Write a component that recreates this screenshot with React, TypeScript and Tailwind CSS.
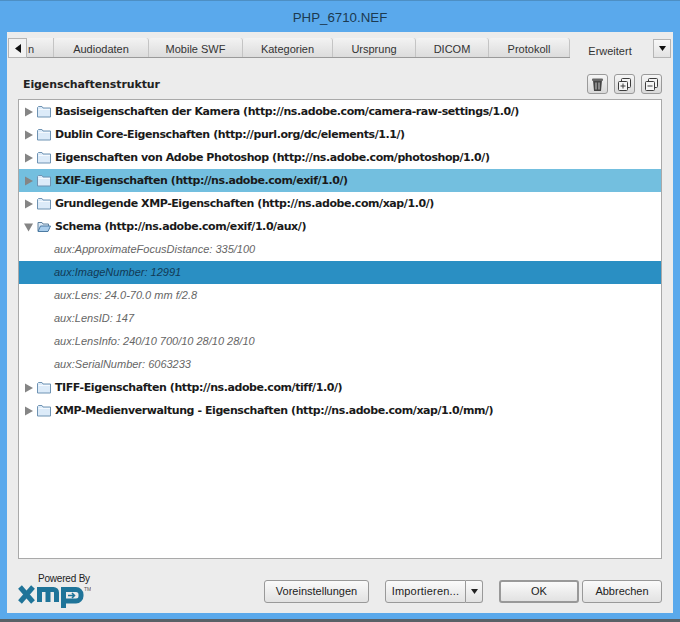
const FONT = "font-['Liberation_Sans',Arial,sans-serif]";

const tabs = [
  { label: "Audiodaten", width: "w-[95px]" },
  { label: "Mobile SWF", width: "w-[94px]" },
  { label: "Kategorien", width: "w-[90px]" },
  { label: "Ursprung", width: "w-[83px]" },
  { label: "DICOM", width: "w-[73px]" },
  { label: "Protokoll", width: "w-[81px]" },
];

const Folder = ({ open }: { open?: boolean }) => (
  <svg width="14" height="13" viewBox="0 0 14 13" className="shrink-0">
    {open ? (
      <>
        <path d="M1 11V2.5h4l1 1.5h5.5V6" fill="#dbe9f6" stroke="#5d7f9c" />
        <path d="M1 11.5 3.5 6h10l-2.5 5.5z" fill="#a9cdec" stroke="#4d7ba3" />
      </>
    ) : (
      <>
        <path d="M.5 12V2.5l1-1h3.5l1 1.5h7.5v9z" fill="#dcebf9" stroke="#6f93b3" />
        <path d="M1.5 4.5h11.5" stroke="#f4f9fe" />
      </>
    )}
  </svg>
);

const Arrow = ({ open }: { open?: boolean }) => (
  <svg width="9" height="10" viewBox="0 0 9 10" className="shrink-0">
    <path d={open ? "M0 1.5h9L4.5 9.5z" : "M1 .5 9 5l-8 4.5z"} fill="#858585" />
  </svg>
);

const GroupRow = ({ label, open, active }: { label: string; open?: boolean; active?: boolean }) => (
  <div className={`h-[23px] flex items-center pl-[5px] ${active ? "bg-[#73bfdf]" : ""}`}>
    <Arrow open={open} />
    <span className="ml-[4px]"><Folder open={open} /></span>
    <span className="ml-[4px] pt-[1px] font-['DejaVu_Sans',sans-serif] font-bold text-[11px] tracking-[-0.42px] text-[#1a1a1a] whitespace-nowrap">
      {label}
    </span>
  </div>
);

const LeafRow = ({ label, active }: { label: string; active?: boolean }) => (
  <div className={`h-[23px] flex items-center pl-[35px] ${active ? "bg-[#2a8fc3]" : ""}`}>
    <span className={`${FONT} italic text-[11px] whitespace-nowrap ${active ? "text-[#123a55]" : "text-[#666]"}`}>
      {label}
    </span>
  </div>
);

const Btn = ({ children, className = "" }: { children: React.ReactNode; className?: string }) => (
  <button className={`h-[23px] rounded-[3px] border border-[#999] bg-gradient-to-b from-[#fafafa] to-[#e2e2e2] text-[11px] text-[#222] flex items-center justify-center ${className}`}>
    {children}
  </button>
);

const IconBtn = ({ children }: { children: React.ReactNode }) => (
  <button className="w-[21px] h-[20px] rounded-[3px] border border-[#9a9a9a] bg-gradient-to-b from-[#f6f6f6] to-[#d9d9d9] flex items-center justify-center">
    {children}
  </button>
);

const Stack = ({ minus }: { minus?: boolean }) => (
  <svg width="15" height="15" viewBox="0 0 15 15" fill="#f4f4f4" stroke="#3c3c3c">
    <rect x="4.5" y="1.5" width="9" height="9" rx="1" />
    <rect x="1.5" y="4.5" width="9" height="9" rx="1" />
    <path d={minus ? "M3.5 9h5" : "M3.5 9h5M6 6.5v5"} fill="none" />
  </svg>
);

// xmp logo mark
const XmpLogo = () => (
  <svg width="73" height="23" viewBox="0 0 73 23" fill="none" stroke="#1f7499" strokeWidth="5">
    <path d="M2 2 15 17M15 2 2 17" />
    <path d="M21.5 17V4.5H35.5a3 3 0 0 1 3 3V17M30 4.5V17" />
    <path d="M45.5 23V4.5H58a5 5 0 0 1 5 5v1.5a5 5 0 0 1-5 5H48" />
    <path d="M50 10.5h6M54 8l2.5 2.5L54 13" stroke="#1f7499" strokeWidth="1.5" />
    <text x="66" y="6" fontSize="5" fill="#555" stroke="none" fontFamily="Liberation Sans">TM</text>
  </svg>
);

export default function App() {
  return (
    <div className={`${FONT} w-[680px] h-[622px] overflow-hidden bg-[#5aa9ec] flex flex-col`}>
      <div className="h-[32px] shrink-0 flex items-center justify-center pt-[3px] border-t border-[#4d8fc4] text-[13.3px] text-[#1c3a50]">
        PHP_6710.NEF
      </div>
      <div className="mx-[7px] h-[581px] shrink-0 bg-[#ececec] flex flex-col">
        {/* tab strip */}
        <div className="h-[27px] pt-[6px] pl-[1px] flex items-stretch shrink-0">
          <div className="flex items-stretch h-[20px] border-b border-[#9a9a9a] w-[642px] relative">
            <div className="absolute left-0 top-0 w-[19px] h-[20px] bg-[#f2f2f2] border border-[#b5b5b5] flex items-center justify-center">
              <svg width="6" height="9" viewBox="0 0 6 9"><path d="M6 0v9L0 4.5z" fill="#111" /></svg>
            </div>
            <div className="w-[46px] bg-gradient-to-b from-[#f3f3f3] to-[#dcdcdc] border-r border-[#c4c4c4] text-[11px] text-[#333] flex items-center pl-[20px] pt-[3px]">n</div>
            {tabs.map((t) => (
              <div
                key={t.label}
                className={`${t.width} rounded-t-[3px] bg-gradient-to-b from-[#f3f3f3] to-[#dcdcdc] border-r border-[#c4c4c4] flex items-center justify-center text-[11px] text-[#333] pt-[3px]`}
              >
                {t.label}
              </div>
            ))}
            <div className="w-[80px] h-[21px] bg-[#ececec] rounded-t-[3px] flex items-center justify-center text-[11px] text-[#333] pt-[5px]">
              Erweitert
            </div>
          </div>
          <div className="ml-[3px] mt-[1px] w-[18px] h-[19px] bg-gradient-to-b from-[#f8f8f8] to-[#e2e2e2] border border-[#b5b5b5] flex items-center justify-center">
            <svg width="7" height="5" viewBox="0 0 7 5"><path d="M0 0h7L3.5 5z" fill="#111" /></svg>
          </div>
        </div>

        {/* heading */}
        <div className="h-[40px] shrink-0 flex items-center justify-between pl-[16px] pr-[11px]">
          <span className="font-['DejaVu_Sans',sans-serif] font-bold text-[11px] tracking-[-0.1px] text-[#222] mt-[13px]">Eigenschaftenstruktur</span>
          <div className="flex gap-[6px] mt-[10px]">
            <IconBtn>
              <svg width="13" height="15" viewBox="0 0 13 15">
                <path d="M2 3h9l-1 11H3z" fill="#444" />
                <rect x="1" y="1.5" width="11" height="2.5" rx="1" fill="#666" />
                <path d="M5 5.5v7M8 5.5v7" stroke="#ccc" />
              </svg>
            </IconBtn>
            <IconBtn><Stack /></IconBtn>
            <IconBtn><Stack minus /></IconBtn>
          </div>
        </div>

        {/* tree */}
        <div className="ml-[11px] w-[644px] h-[460px] bg-white border border-[#a9a9a9] shrink-0">
          <GroupRow label="Basiseigenschaften der Kamera (http://ns.adobe.com/camera-raw-settings/1.0/)" />
          <GroupRow label="Dublin Core-Eigenschaften (http://purl.org/dc/elements/1.1/)" />
          <GroupRow label="Eigenschaften von Adobe Photoshop (http://ns.adobe.com/photoshop/1.0/)" />
          <GroupRow label="EXIF-Eigenschaften (http://ns.adobe.com/exif/1.0/)" active />
          <GroupRow label="Grundlegende XMP-Eigenschaften (http://ns.adobe.com/xap/1.0/)" />
          <GroupRow label="Schema (http://ns.adobe.com/exif/1.0/aux/)" open />
          <LeafRow label="aux:ApproximateFocusDistance: 335/100" />
          <LeafRow label="aux:ImageNumber: 12991" active />
          <LeafRow label="aux:Lens: 24.0-70.0 mm f/2.8" />
          <LeafRow label="aux:LensID: 147" />
          <LeafRow label="aux:LensInfo: 240/10 700/10 28/10 28/10" />
          <LeafRow label="aux:SerialNumber: 6063233" />
          <GroupRow label="TIFF-Eigenschaften (http://ns.adobe.com/tiff/1.0/)" />
          <GroupRow label="XMP-Medienverwaltung - Eigenschaften (http://ns.adobe.com/xap/1.0/mm/)" />
        </div>

        {/* footer */}
        <div className="flex-1 flex items-start pl-[11px] pr-[11px] pt-[21px]">
          <div className="w-[246px] h-[34px] flex flex-col -mt-[7px]">
            <span className="text-[10px] leading-[11px] text-[#222] pl-[20px] tracking-[-0.2px]">Powered By</span>
            <span className="mt-[1px]"><XmpLogo /></span>
          </div>
          <div className="flex items-start">
            <Btn className="w-[105px]">Voreinstellungen</Btn>
            <div className="ml-[16px] flex">
              <Btn className="w-[81px] rounded-r-none tracking-[0.2px]">Importieren...</Btn>
              <Btn className="w-[17px] rounded-l-none border-l-0">
                <svg width="7" height="5" viewBox="0 0 7 5"><path d="M0 0h7L3.5 5z" fill="#222" /></svg>
              </Btn>
            </div>
            <Btn className="ml-[16px] w-[80px] border-[#2f7ea6] border-2">OK</Btn>
            <Btn className="ml-[3px] w-[80px]">Abbrechen</Btn>
          </div>
        </div>
      </div>
      <div className="h-[6px] shrink-0" />
      <div className="flex-1 bg-[#596167]" />
    </div>
  );
}
